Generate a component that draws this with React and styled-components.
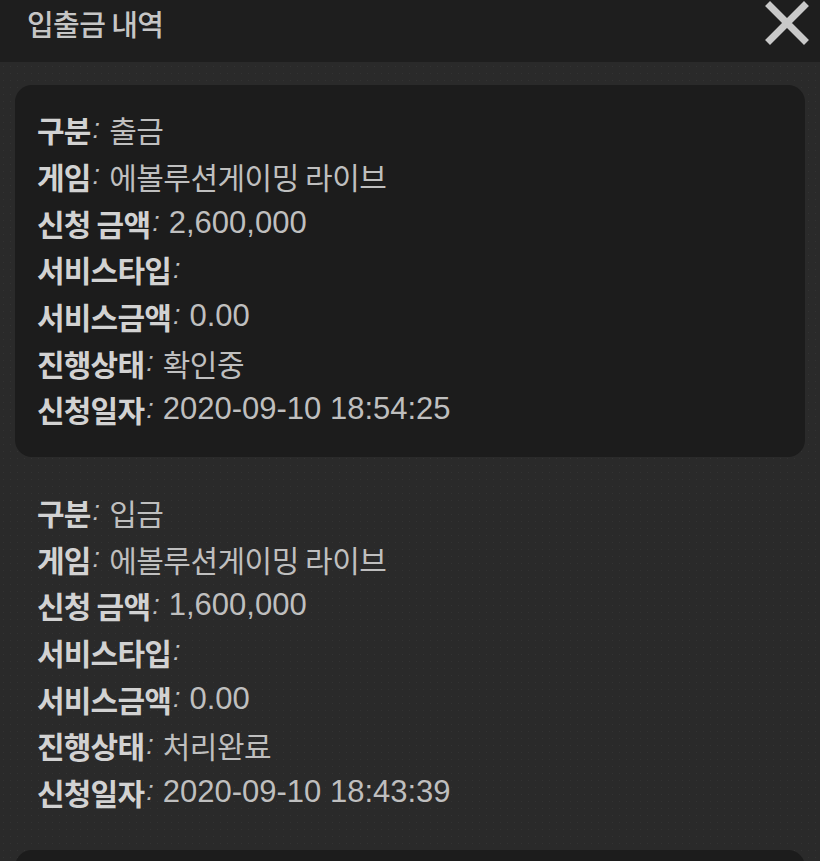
import styled, { createGlobalStyle } from "styled-components";

const GlobalStyle = createGlobalStyle`
  html, body {
    margin: 0;
    padding: 0;
    height: 100%;
    overflow: hidden;
    background: #2a2a2a;
  }
  body {
    font-family: "Liberation Sans", "Noto Sans CJK KR", sans-serif;
  }
`;

const history = [
  {
    id: 1,
    highlight: true,
    rows: [
      ["구분", "출금"],
      ["게임", "에볼루션게이밍 라이브"],
      ["신청 금액", "2,600,000", true],
      ["서비스타입", ""],
      ["서비스금액", "0.00", true],
      ["진행상태", "확인중"],
      ["신청일자", "2020-09-10 18:54:25", true],
    ],
  },
  {
    id: 2,
    highlight: false,
    rows: [
      ["구분", "입금"],
      ["게임", "에볼루션게이밍 라이브"],
      ["신청 금액", "1,600,000", true],
      ["서비스타입", ""],
      ["서비스금액", "0.00", true],
      ["진행상태", "처리완료"],
      ["신청일자", "2020-09-10 18:43:39", true],
    ],
  },
  // next entry only peeks in at the bottom of the list
  { id: 3, highlight: true, rows: [] },
];

const App = () => {
  return (
    <Page>
      <GlobalStyle />
      <Header>
        <Title>입출금 내역</Title>
        <CloseButton aria-label="닫기">
          <svg width="44" height="44" viewBox="0 0 44 44">
            <path
              d="M5 5 L39 39 M39 5 L5 39"
              stroke="#c9c9c9"
              strokeWidth="7"
              strokeLinecap="square"
              fill="none"
            />
          </svg>
        </CloseButton>
      </Header>
      <List>
        {history.map((item) => (
          <Entry key={item.id} $highlight={item.highlight}>
            {item.rows.map(([label, value, numeric]) => (
              <Row key={label}>
                <Label>{label}</Label>
                <Colon>:</Colon>
                <Value $numeric={numeric}>{value}</Value>
              </Row>
            ))}
          </Entry>
        ))}
      </List>
    </Page>
  );
};

const Page = styled.div`
  height: 100vh;
  display: flex;
  flex-direction: column;
  background-color: #2a2a2a;
  background-image: radial-gradient(
    rgba(255, 255, 255, 0.045) 0.6px,
    transparent 0.9px
  );
  background-size: 7px 7px;
`;

const Header = styled.header`
  flex: none;
  height: 62px;
  box-sizing: border-box;
  background: #1e1e1e;
  display: flex;
  justify-content: space-between;
  align-items: flex-start;
  padding: 4px 11px 0 27px;
`;

const Title = styled.h1`
  margin: 0;
  font-family: "Noto Sans CJK KR", sans-serif;
  font-size: 29px;
  font-weight: 500;
  line-height: 38px;
  letter-spacing: -0.6px;
  color: #c6c6c6;
`;

const CloseButton = styled.button`
  border: none;
  background: none;
  padding: 0;
  margin-top: -3px;
  width: 44px;
  height: 44px;
  cursor: pointer;
  svg {
    display: block;
  }
`;

const List = styled.div`
  flex: 1;
  min-height: 0;
  overflow: hidden;
  display: flex;
  flex-direction: column;
  gap: 11px;
  padding: 23px 15px 0;
`;

const Entry = styled.section`
  flex: none;
  min-height: 60px;
  background: ${(p) => (p.$highlight ? "#1c1c1c" : "transparent")};
  border-radius: 17px;
  padding: 21px 22px 24px;
`;

const Row = styled.div`
  height: 46.67px;
  display: flex;
  align-items: center;
  white-space: nowrap;
`;

const Label = styled.span`
  font-family: "Noto Sans CJK KR", sans-serif;
  font-size: 30px;
  font-weight: 700;
  letter-spacing: -0.8px;
  color: #d2d2d2;
`;

const Colon = styled.span`
  font-family: "Liberation Sans", sans-serif;
  font-size: 27px;
  font-style: italic;
  color: #bdbdbd;
  margin: 0 9px 0 2px;
`;

const Value = styled.span`
  font-family: ${(p) =>
    p.$numeric ? '"Liberation Sans", sans-serif' : '"Noto Sans CJK KR", sans-serif'};
  font-size: ${(p) => (p.$numeric ? "31px" : "30px")};
  font-weight: 400;
  letter-spacing: ${(p) => (p.$numeric ? "0" : "-0.5px")};
  color: #bfbfbf;
`;

export default App;
